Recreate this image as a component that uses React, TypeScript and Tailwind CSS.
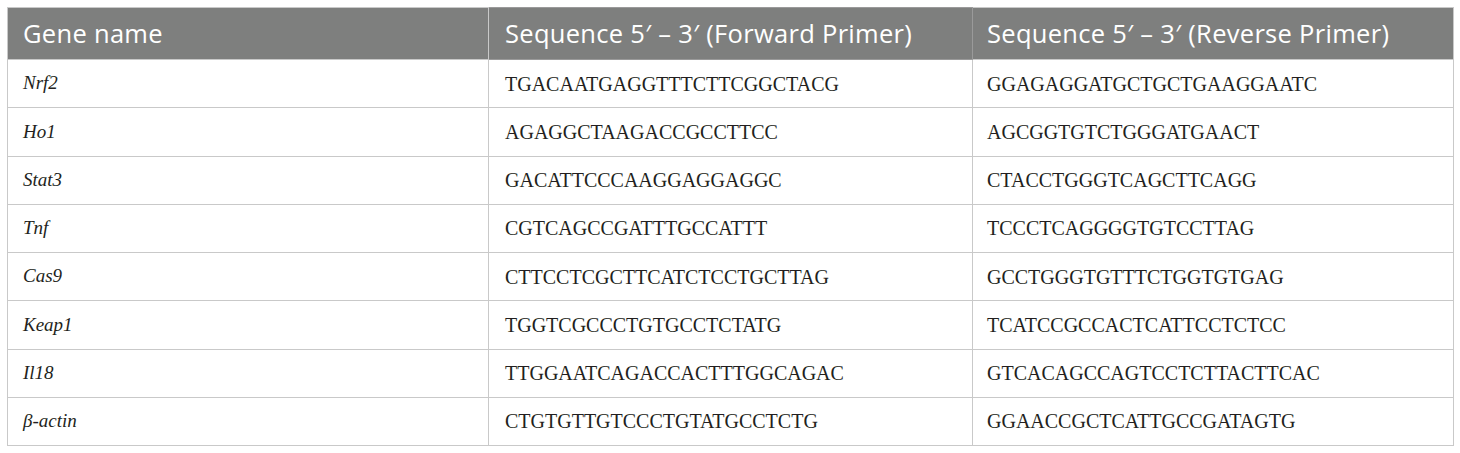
const rows: [string, string, string][] = [
  ['Nrf2', 'TGACAATGAGGTTTCTTCGGCTACG', 'GGAGAGGATGCTGCTGAAGGAATC'],
  ['Ho1', 'AGAGGCTAAGACCGCCTTCC', 'AGCGGTGTCTGGGATGAACT'],
  ['Stat3', 'GACATTCCCAAGGAGGAGGC', 'CTACCTGGGTCAGCTTCAGG'],
  ['Tnf', 'CGTCAGCCGATTTGCCATTT', 'TCCCTCAGGGGTGTCCTTAG'],
  ['Cas9', 'CTTCCTCGCTTCATCTCCTGCTTAG', 'GCCTGGGTGTTTCTGGTGTGAG'],
  ['Keap1', 'TGGTCGCCCTGTGCCTCTATG', 'TCATCCGCCACTCATTCCTCTCC'],
  ['Il18', 'TTGGAATCAGACCACTTTGGCAGAC', 'GTCACAGCCAGTCCTCTTACTTCAC'],
  ['β-actin', 'CTGTGTTGTCCCTGTATGCCTCTG', 'GGAACCGCTCATTGCCGATAGTG'],
];

export default function App() {
  return (
    <div className="bg-white w-[1460px] h-[453px] pt-[7px] pl-[7px]">
      <table className="border-collapse table-fixed w-[1446px]">
        <colgroup>
          <col className="w-[481px]" />
          <col className="w-[484px]" />
          <col className="w-[481px]" />
        </colgroup>
        <thead>
          <tr className="h-[52px] bg-[#7e7f7e] text-white font-['Open_Sans',sans-serif] text-[25.5px] tracking-[0.3px]">
            <th className="text-left font-normal pl-[15px] border border-[#c9c9c9]">Gene name</th>
            <th className="text-left font-normal pl-[16px] border border-[#9a9a9a]">Sequence 5′ – 3′ (Forward Primer)</th>
            <th className="text-left font-normal pl-[14px] border border-[#c9c9c9]">Sequence 5′ – 3′ (Reverse Primer)</th>
          </tr>
        </thead>
        <tbody className="text-[#231f20] font-['Liberation_Serif',serif] text-[20px]">
          {rows.map(([gene, fwd, rev]) => (
            <tr key={gene} className="h-[48.25px]">
              <td className="pl-[15px] border border-[#c9c9c9] italic text-[19px]">{gene}</td>
              <td className="pl-[16px] border border-[#c9c9c9]">{fwd}</td>
              <td className="pl-[14px] border border-[#c9c9c9]">{rev}</td>
            </tr>
          ))}
        </tbody>
      </table>
    </div>
  );
}
